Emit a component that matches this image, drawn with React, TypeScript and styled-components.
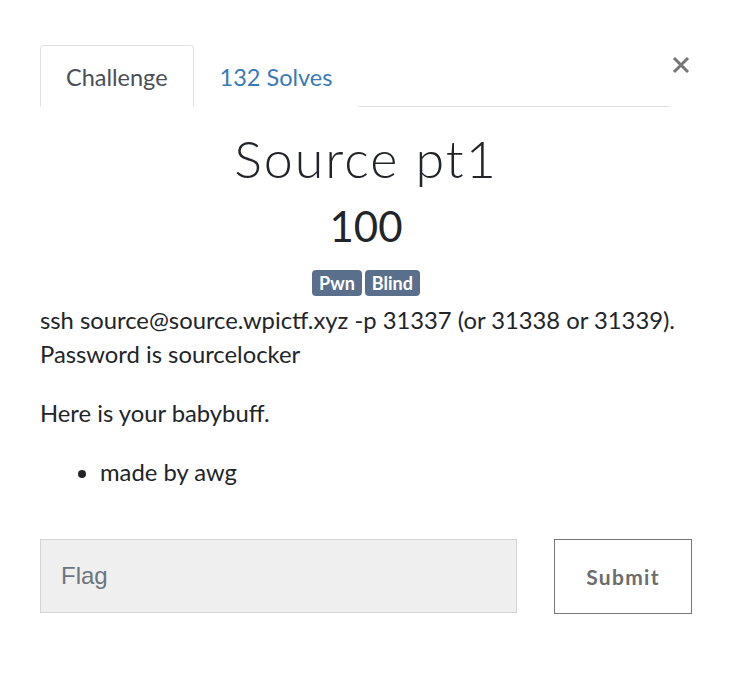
import React from 'react';
import styled, { createGlobalStyle } from 'styled-components';

const GlobalStyle = createGlobalStyle`
  body {
    margin: 0;
    background: #fff;
    font-family: 'Lato', 'Liberation Sans', sans-serif;
    color: #212529;
  }
`;

const Modal = styled.div`
  width: 736px;
  box-sizing: border-box;
  padding: 45px 44px 40px 40px;
`;

const Header = styled.div`
  display: flex;
  align-items: flex-start;
`;

const Tabs = styled.ul`
  flex: 1;
  display: flex;
  list-style: none;
  margin: 0;
  padding: 0;
  border-bottom: 1px solid #dee2e6;
`;

const Tab = styled.li<{ $active?: boolean }>`
  margin-bottom: -1px;
  padding: 17px 25px 15px;
  font-size: 23.5px;
  line-height: 28px;
  border: 1px solid ${(p) => (p.$active ? '#dee2e6' : 'transparent')};
  border-bottom-color: ${(p) => (p.$active ? '#fff' : 'transparent')};
  border-radius: 4px 4px 0 0;
  background: #fff;
  color: ${(p) => (p.$active ? '#495057' : '#3a7ab6')};
`;

const Close = styled.button`
  border: 0;
  background: none;
  padding: 0;
  margin-top: 8px;
  width: 22px;
  height: 24px;
  display: flex;
  align-items: center;
  justify-content: center;
  cursor: pointer;
`;

const Title = styled.h2`
  margin: 21px 0 0;
  text-align: center;
  font-family: 'Lato', sans-serif;
  font-weight: 300;
  font-size: 52px;
  line-height: 60px;
  letter-spacing: 2px;
  color: #212529;
`;

const Value = styled.h4`
  margin: 13px 0 0;
  text-align: center;
  font-weight: 400;
  font-size: 42px;
  line-height: 50px;
  color: #212529;
`;

const Tags = styled.div`
  display: flex;
  justify-content: center;
  gap: 3px;
  margin-top: 19px;
`;

const Badge = styled.span`
  background: #5a6f8b;
  color: #fff;
  font-weight: 700;
  font-size: 18px;
  line-height: 26px;
  padding: 0 7px;
  border-radius: 4px;
`;

const Description = styled.div`
  margin-top: 7px;
  font-size: 23.8px;
  line-height: 34px;
  color: #212529;

  p {
    margin: 0 0 25px;
  }

  ul {
    margin: 27px 0 0;
    padding-left: 60px;
  }

  p + ul {
    margin-top: 2px;
  }
`;

const SubmitRow = styled.form`
  display: flex;
  gap: 37px;
  margin-top: 50px;
`;

const FlagInput = styled.input`
  flex: 1;
  height: 74px;
  box-sizing: border-box;
  border: 1px solid #d4d4d4;
  background: #efefef;
  padding: 0 20px;
  font-family: 'Liberation Sans', Arial, sans-serif;
  font-size: 24px;
  color: #495057;
  &::placeholder {
    color: #6c757d;
  }
`;

const SubmitButton = styled.button`
  width: 138px;
  height: 75px;
  box-sizing: border-box;
  border: 1px solid #777;
  background: #fff;
  font-family: 'Lato', sans-serif;
  font-weight: 700;
  font-size: 21px;
  letter-spacing: 1.3px;
  color: #6c6c6c;
`;

export default function App() {
  return (
    <Modal>
      <GlobalStyle />
      <Header>
        <Tabs>
          <Tab $active>Challenge</Tab>
          <Tab>132 Solves</Tab>
        </Tabs>
        <Close aria-label="Close">
          <svg width="18" height="18" viewBox="0 0 18 18">
            <path d="M2 2 L16 16 M16 2 L2 16" stroke="#777" strokeWidth="3" />
          </svg>
        </Close>
      </Header>
      <Title>Source pt1</Title>
      <Value>100</Value>
      <Tags>
        <Badge>Pwn</Badge>
        <Badge>Blind</Badge>
      </Tags>
      <Description>
        <p>
          ssh source@source.wpictf.xyz -p 31337 (or 31338 or 31339).
          <br />
          Password is sourcelocker
        </p>
        <p>Here is your babybuff.</p>
        <ul>
          <li>made by awg</li>
        </ul>
      </Description>
      <SubmitRow onSubmit={(e) => e.preventDefault()}>
        <FlagInput placeholder="Flag" />
        <SubmitButton type="submit">Submit</SubmitButton>
      </SubmitRow>
    </Modal>
  );
}
